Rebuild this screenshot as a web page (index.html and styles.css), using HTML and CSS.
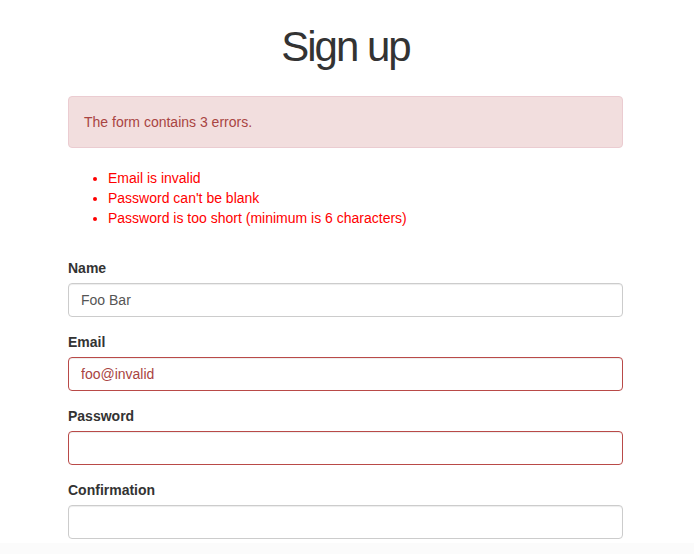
FILE: index.html
```html
<!DOCTYPE html>
<html lang="en">
    <head>
        <meta charset="UTF-8">
        <meta name="viewport" content="width=device-width, initial-scale=1.0">
        <title>Sign up</title>
        <link rel="stylesheet" href="styles.css">
    </head>
<body>
    <main class="page">
        <h1>Sign up</h1>

        <div id="error_explanation">
            <div class="alert alert-danger">The form contains 3 errors.</div>
            <ul>
                <li>Email is invalid</li>
                <li>Password can't be blank</li>
                <li>Password is too short (minimum is 6 characters)</li>
            </ul>
        </div>

        <form class="signup">
            <div class="field">
                <label for="user_name">Name</label>
                <input id="user_name" class="form-control" type="text" value="Foo Bar">
            </div>
            <div class="field">
                <label for="user_email">Email</label>
                <input id="user_email" class="form-control field-error" type="email" value="foo@invalid">
            </div>
            <div class="field">
                <label for="user_password">Password</label>
                <input id="user_password" class="form-control field-error" type="password">
            </div>
            <div class="field">
                <label for="user_confirmation">Confirmation</label>
                <input id="user_confirmation" class="form-control" type="password">
            </div>
        </form>
    </main>

    <div class="bottom_bar"></div>
</body>
</html>
```

FILE: styles.css
```css
* {
    margin: 0;
    padding: 0;
    box-sizing: border-box;
}

body {
    font-family: "Liberation Sans", Arial, sans-serif;
    font-size: 14px;
    line-height: 20px;
    color: #333;
    background-color: #fff;
}

.page {
    width: 555px;
    margin-left: 68px;
}

h1 {
    font-size: 42px;
    line-height: 46px;
    font-weight: 500;
    letter-spacing: -2px;
    text-align: center;
    margin: 24px 0 26px;
}

.alert {
    padding: 15px;
    margin-bottom: 20px;
    border: 1px solid #ebccd1;
    border-radius: 4px;
}

.alert-danger {
    color: #a94442;
    background-color: #f2dede;
}

#error_explanation ul {
    color: red;
    margin: 0 0 30px 0;
    padding-left: 40px;
}

.field { margin-bottom: 15px; }

.field label {
    display: inline-block;
    font-weight: bold;
    margin-bottom: 5px;
}

.form-control {
    display: block;
    width: 100%;
    height: 34px;
    padding: 6px 12px;
    font-family: inherit;
    font-size: 14px;
    line-height: 20px;
    color: #555;
    background-color: #fff;
    border: 1px solid #ccc;
    border-radius: 4px;
    box-shadow: inset 0 1px 1px rgba(0, 0, 0, 0.075);
}

.form-control.field-error {
    color: #a94442;
    border-color: #b94a48;
}

.bottom_bar {
    position: fixed;
    left: 0;
    right: 0;
    bottom: 0;
    height: 11px;
    background-color: #fbfbfb;
}
```
